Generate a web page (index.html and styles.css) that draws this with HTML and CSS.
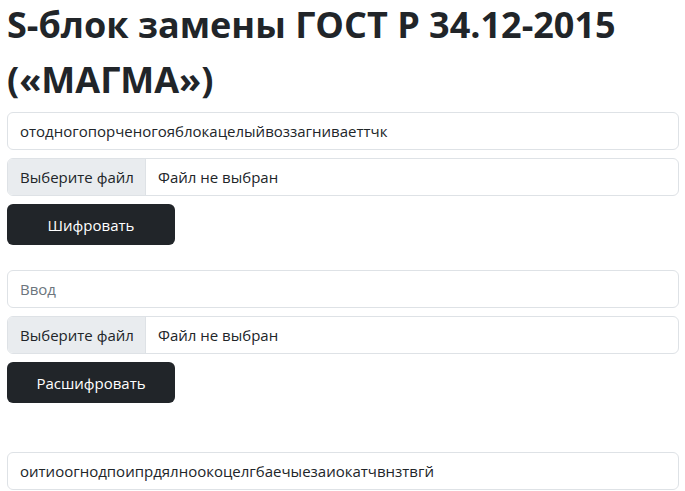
FILE: index.html
```html
<!DOCTYPE html>
<html lang="ru">
<head>
<meta charset="utf-8">
<title>МАГМА</title>
<link rel="stylesheet" href="styles.css">
</head>
<body>
<main class="page">
  <h1 class="title">S-блок замены ГОСТ Р 34.12-2015 («МАГМА»)</h1>

  <section class="block">
    <div class="field">отодногопорченогояблокацелыйвоззагниваеттчк</div>
    <div class="file">
      <span class="file-btn">Выберите файл</span>
      <span class="file-name">Файл не выбран</span>
    </div>
    <button class="btn">Шифровать</button>
  </section>

  <section class="block block-second">
    <div class="field placeholder">Ввод</div>
    <div class="file">
      <span class="file-btn">Выберите файл</span>
      <span class="file-name">Файл не выбран</span>
    </div>
    <button class="btn">Расшифровать</button>
  </section>

  <section class="block block-result">
    <div class="field">оитиоогнодпоипрдялноокоцелгбаечыезаиокатчвнзтвгй</div>
  </section>
</main>
</body>
</html>
```
FILE: styles.css
```css
* { box-sizing: border-box; }
html, body { margin: 0; padding: 0; background: #fff; }
body {
  font-family: "Open Sans", "Noto Sans", sans-serif;
  color: #212529;
}
.page {
  padding: 0 6px 0 7px;
}
.title {
  margin: -3px 0 5px;
  font-family: "Open Sans", sans-serif;
  font-weight: 700;
  font-size: 36px;
  line-height: 55px;
  color: #212529;
}
.block {
  display: flex;
  flex-direction: column;
  align-items: flex-start;
  gap: 8px;
}
.block-second { margin-top: 25px; }
.block-result { margin-top: 49px; }
.field {
  width: 100%;
  height: 38px;
  border: 1px solid #dee2e6;
  border-radius: 6px;
  padding: 0 12px;
  display: flex;
  align-items: center;
  font-size: 15px;
  color: #212529;
}
.placeholder { color: #6c757d; }
.file {
  width: 100%;
  height: 38px;
  border: 1px solid #dee2e6;
  border-radius: 6px;
  display: flex;
  overflow: hidden;
  font-size: 15px;
  white-space: nowrap;
}
.file-btn {
  flex: 0 0 138px;
  background: #e9ecef;
  border-right: 1px solid #dee2e6;
  padding: 0 0 0 12px;
  display: flex;
  align-items: center;
}
.file-name {
  display: flex;
  align-items: center;
  padding: 0 12px;
}
.btn {
  width: 168px;
  height: 41px;
  border: 0;
  border-radius: 6px;
  background: #212529;
  color: #fff;
  font-family: "Open Sans", sans-serif;
  font-size: 15px;
  padding: 0;
}
```
